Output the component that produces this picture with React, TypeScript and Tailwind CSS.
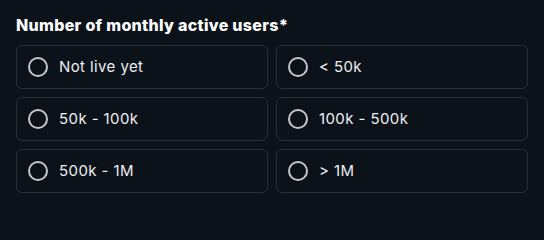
import { useState } from "react";

const OPTIONS = ["Not live yet", "< 50k", "50k - 100k", "100k - 500k", "500k - 1M", "> 1M"];

export default function App() {
  const [selected, setSelected] = useState<string | null>(null);

  return (
    <div className="min-h-screen w-full bg-[#0c121a] px-4 pt-[15px] font-['Inter',sans-serif]">
      <p className="mb-[10px] text-[16px] font-extrabold leading-5 tracking-[0.3px] text-white">
        Number of monthly active users*
      </p>
      <div className="grid grid-cols-2 gap-2">
        {OPTIONS.map((o) => (
          <button
            key={o}
            onClick={() => setSelected(o)}
            className="flex h-11 items-center gap-[11px] rounded-md border border-[#2a2f37] bg-[#0c121a] px-[11px] text-left"
          >
            <span className="flex h-5 w-5 shrink-0 items-center justify-center rounded-full border-2 border-[#c5c7cb]">
              {selected === o && <span className="h-2.5 w-2.5 rounded-full bg-[#c5c7cb]" />}
            </span>
            <span className="text-[15px] leading-5 tracking-[0.4px] text-[#eceef0]">{o}</span>
          </button>
        ))}
      </div>
    </div>
  );
}
